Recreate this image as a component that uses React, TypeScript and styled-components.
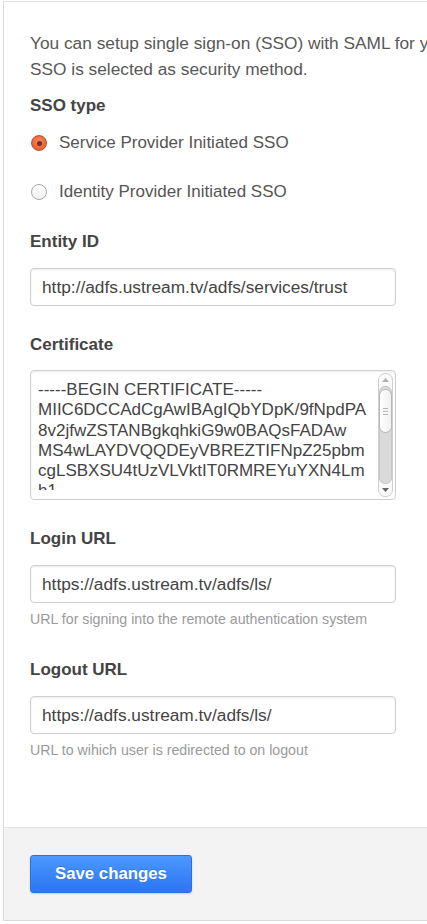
import React from 'react';
import styled, { createGlobalStyle } from 'styled-components';

const GlobalStyle = createGlobalStyle`
  html, body {
    margin: 0;
    padding: 0;
    background: #fff;
    overflow: hidden;
  }
  body {
    font-family: "Liberation Sans", Arial, sans-serif;
  }
`;

const Page = styled.div`
  width: 427px;
  height: 924px;
  overflow: hidden;
  padding: 1px 0 0 3px;
  box-sizing: border-box;
`;

const Panel = styled.div`
  width: 600px;
  border-top: 1px solid #e4e4e4;
  border-left: 1px solid #dcdcdc;
  border-bottom: 1px solid #dcdcdc;
  background: #fff;
`;

const Content = styled.div`
  padding: 28px 0 68px 26px;
`;

const Intro = styled.p`
  margin: 0;
  font-size: 17.3px;
  line-height: 26px;
  color: #585858;
  white-space: nowrap;
`;

const Label = styled.div<{ $top: number }>`
  margin-top: ${(p) => p.$top}px;
  font-size: 17px;
  line-height: 20px;
  font-weight: bold;
  color: #444;
`;

const RadioRow = styled.label<{ $top: number }>`
  display: flex;
  align-items: center;
  gap: 12px;
  margin-top: ${(p) => p.$top}px;
  height: 20px;
  font-size: 17px;
  color: #555;
`;

const RadioDot = styled.span<{ $checked?: boolean }>`
  width: 16px;
  height: 16px;
  margin-left: 1px;
  border-radius: 50%;
  box-sizing: border-box;
  display: flex;
  align-items: center;
  justify-content: center;
  border: 1px solid ${(p) => (p.$checked ? '#c44e28' : '#a8a8a8')};
  background: ${(p) =>
    p.$checked
      ? 'radial-gradient(circle at 50% 40%, #f58a62 0%, #e8673d 60%, #d4542c 100%)'
      : 'linear-gradient(#ffffff, #f0f0f0)'};
  &::after {
    content: '';
    width: 5px;
    height: 5px;
    border-radius: 50%;
    background: ${(p) => (p.$checked ? '#7a2c14' : 'transparent')};
  }
`;

const TextInput = styled.div`
  margin-top: 16px;
  width: 366px;
  height: 38px;
  box-sizing: border-box;
  border: 1px solid #cfcfcf;
  border-radius: 4px;
  box-shadow: inset 0 1px 2px rgba(0, 0, 0, 0.08);
  padding: 0 11px;
  display: flex;
  align-items: center;
  font-size: 17.3px;
  color: #444;
  white-space: nowrap;
`;

const AreaBox = styled.div`
  position: relative;
  margin-top: 15px;
  width: 366px;
  height: 130px;
  box-sizing: border-box;
  border: 1px solid #cfcfcf;
  border-radius: 4px;
  box-shadow: inset 0 1px 2px rgba(0, 0, 0, 0.08);
`;

const AreaClip = styled.div`
  height: 119px;
  overflow: hidden;
`;

const AreaText = styled.div`
  padding: 9px 0 0 7px;
  font-size: 17px;
  line-height: 20.3px;
  color: #444;
  white-space: pre;
`;

const Scrollbar = styled.div`
  position: absolute;
  top: 2px;
  right: 2px;
  bottom: 2px;
  width: 15px;
  border: 1px solid #cfcfcf;
  border-radius: 7px;
  box-sizing: border-box;
  background: #fafafa;
  display: flex;
  flex-direction: column;
  align-items: center;
`;

const Arrow = styled.div`
  height: 12px;
  display: flex;
  align-items: center;
  justify-content: center;
`;

const Track = styled.div`
  flex: 1;
  width: 13px;
  border-radius: 6px;
  background: #dadada;
  border: 1px solid #c8c8c8;
  box-sizing: border-box;
  display: flex;
  flex-direction: column;
`;

const Thumb = styled.div`
  height: 42px;
  margin: 2px -1px 0;
  border-radius: 7px;
  border: 1px solid #b9b9b9;
  background: linear-gradient(to right, #ffffff, #f1f1f1);
  display: flex;
  align-items: center;
  justify-content: center;
`;

const Help = styled.div`
  margin-top: 8px;
  font-size: 14.2px;
  line-height: 17px;
  color: #9a9a9a;
`;

const Footer = styled.div`
  background: #f3f3f3;
  border-top: 1px solid #e2e2e2;
  padding: 27px 0 27px 26px;
`;

const SaveButton = styled.button`
  width: 162px;
  height: 38px;
  border: 1px solid #2b6fe0;
  border-radius: 3px;
  background: linear-gradient(#4b98ff, #2c76f4);
  box-shadow: 0 1px 2px rgba(0, 0, 0, 0.15);
  color: #fff;
  font-family: "Liberation Sans", Arial, sans-serif;
  font-size: 16.8px;
  font-weight: bold;
  text-shadow: 0 -1px 0 rgba(0, 0, 0, 0.15);
  cursor: pointer;
`;

const cert = [
  '-----BEGIN CERTIFICATE-----',
  'MIIC6DCCAdCgAwIBAgIQbYDpK/9fNpdPA',
  '8v2jfwZSTANBgkqhkiG9w0BAQsFADAw',
  'MS4wLAYDVQQDEyVBREZTIFNpZ25pbm',
  'cgLSBXSU4tUzVLVktIT0RMREYuYXN4Lm',
  'h1',
].join('\n');

const App: React.FC = () => {
  return (
    <Page>
      <GlobalStyle />
      <Panel>
        <Content>
          <Intro>
            You can setup single sign-on (SSO) with SAML for your users when SAML
            <br />
            SSO is selected as security method.
          </Intro>

          <Label $top={14}>SSO type</Label>
          <RadioRow $top={17}>
            <RadioDot $checked />
            Service Provider Initiated SSO
          </RadioRow>
          <RadioRow $top={29}>
            <RadioDot />
            Identity Provider Initiated SSO
          </RadioRow>

          <Label $top={30}>Entity ID</Label>
          <TextInput>http://adfs.ustream.tv/adfs/services/trust</TextInput>

          <Label $top={29}>Certificate</Label>
          <AreaBox>
            <AreaClip>
              <AreaText>{cert}</AreaText>
            </AreaClip>
            <Scrollbar>
              <Arrow>
                <svg width="7" height="4" viewBox="0 0 7 4">
                  <path d="M0 4 L3.5 0 L7 4 Z" fill="#b0b0b0" />
                </svg>
              </Arrow>
              <Track>
                <Thumb>
                  <svg width="5" height="7" viewBox="0 0 5 7">
                    <path d="M0 0.5 H5 M0 3.5 H5 M0 6.5 H5" stroke="#b5b5b5" strokeWidth="1" />
                  </svg>
                </Thumb>
              </Track>
              <Arrow>
                <svg width="7" height="4" viewBox="0 0 7 4">
                  <path d="M0 0 L3.5 4 L7 0 Z" fill="#666" />
                </svg>
              </Arrow>
            </Scrollbar>
          </AreaBox>

          <Label $top={29}>Login URL</Label>
          <TextInput>https://adfs.ustream.tv/adfs/ls/</TextInput>
          <Help>URL for signing into the remote authentication system</Help>

          <Label $top={32}>Logout URL</Label>
          <TextInput>https://adfs.ustream.tv/adfs/ls/</TextInput>
          <Help>URL to wihich user is redirected to on logout</Help>
        </Content>
        <Footer>
          <SaveButton>Save changes</SaveButton>
        </Footer>
      </Panel>
    </Page>
  );
};

export default App;
